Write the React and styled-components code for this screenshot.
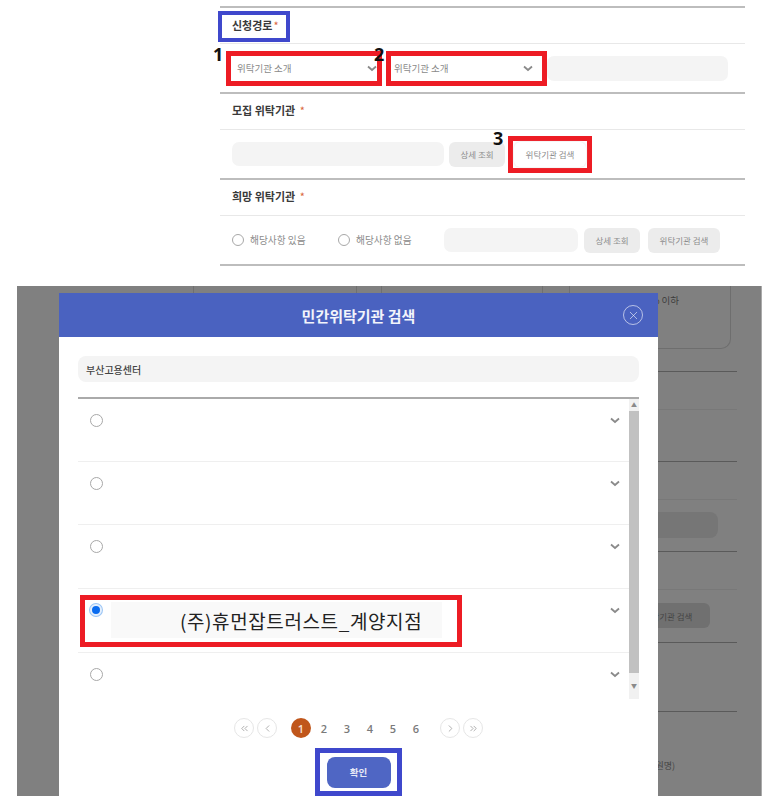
import React from "react";
import styled, { createGlobalStyle } from "styled-components";
import { ChevronLeft, ChevronRight, ChevronsLeft, ChevronsRight, X } from "lucide-react";

const KR = `"Noto Sans CJK KR", "Noto Sans", sans-serif`;
const RED = "#ed1c24";
const BLUE = "#3f48cc";

const Global = createGlobalStyle`
  html, body { margin: 0; padding: 0; background: #fff; overflow: hidden; }
  body { width: 773px; height: 796px; font-family: ${KR}; }
  * { box-sizing: border-box; }
`;

const Page = styled.div`
  width: 773px;
  height: 796px;
  padding-top: 6px;
  overflow: hidden;
`;

const Form = styled.div`
  width: 525px;
  margin-left: 220px;
  border-bottom: 2px solid #bdbdbd;
`;

const Section = styled.section`
  border-top: 2px solid #bdbdbd;
`;

const SectionHead = styled.div`
  height: 36px;
  padding: 0 0 3px 12px;
  display: flex;
  align-items: center;
  border-bottom: 1px solid #e8e8e8;
`;

const BoxedHead = styled(SectionHead)`
  padding: 3px 0 0;
  align-items: flex-start;
`;

const TitleBox = styled.div`
  width: 72px;
  height: 31px;
  margin-left: -2px;
  padding: 0 0 3px 10px;
  border: 4px solid ${BLUE};
  display: flex;
  align-items: center;
`;

const Title = styled.h3`
  margin: 0;
  font-size: 11px;
  font-weight: 700;
  color: #3a3a3a;
`;

const Star = styled.span`
  color: #d9663c;
  margin-left: ${(p) => p.$gap || 1}px;
  font-weight: 400;
`;

const Row = styled.div`
  height: 48px;
  display: flex;
  align-items: center;
  padding-left: ${(p) => p.$left || 12}px;
`;

const Select = styled.div`
  position: relative;
  width: ${(p) => p.$w}px;
  height: 35px;
  margin-right: ${(p) => p.$mr || 0}px;
  padding: 0 ${(p) => p.$pr}px 0 ${(p) => p.$pl}px;
  border: 5px solid ${RED};
  background: #fff;
  display: flex;
  align-items: center;
  justify-content: space-between;
  font-size: 9.5px;
  color: #8a8a8a;
  z-index: 1;
`;

const Marker = styled.span`
  position: absolute;
  left: ${(p) => p.$x}px;
  top: ${(p) => p.$y}px;
  font-family: "Open Sans", sans-serif;
  font-size: 18px;
  font-weight: 700;
  line-height: 18px;
  color: #111;
`;

const Field = styled.div`
  width: ${(p) => p.$w}px;
  height: ${(p) => p.$h || 24}px;
  margin-right: ${(p) => p.$mr || 0}px;
  border-radius: 7px;
  background: #f4f4f4;
  flex: none;
`;

const GreyButton = styled.div`
  width: ${(p) => p.$w}px;
  height: 25px;
  margin-right: ${(p) => p.$mr || 0}px;
  border-radius: 6px;
  background: #ececec;
  color: #8c8c8c;
  font-size: 8.5px;
  display: flex;
  align-items: center;
  justify-content: center;
  flex: none;
`;

const RedFrame = styled.div`
  position: relative;
  width: 84px;
  height: 37px;
  margin-left: 3px;
  border: 5px solid ${RED};
  background: #fff;
  display: flex;
  align-items: center;
  justify-content: center;
`;

const WhiteButton = styled.div`
  width: 72px;
  height: 25px;
  border-radius: 6px;
  background: #fff;
  box-shadow: 0 0 2px #ddd;
  color: #8c8c8c;
  font-size: 8.5px;
  display: flex;
  align-items: center;
  justify-content: center;
`;

const RadioLabel = styled.label`
  display: flex;
  align-items: center;
  gap: 6px;
  width: ${(p) => p.$w}px;
  font-size: 9.7px;
  color: #8c8c8c;
  flex: none;
`;

const Radio = styled.span`
  width: ${(p) => p.$size || 12}px;
  height: ${(p) => p.$size || 12}px;
  border-radius: 50%;
  border: 1.5px solid #a8a8a8;
  background: #fff;
  flex: none;
  display: block;
`;

const CheckedRadio = styled.span`
  width: 12px;
  height: 12px;
  margin: 0 1px 0 0;
  border-radius: 50%;
  background: #0a6cf0;
  border: 2px solid #e4effd;
  box-shadow: 0 0 0 1px #9cc6f5;
  flex: none;
  display: block;
`;

const Backdrop = styled.div`
  position: relative;
  width: 745px;
  height: 510px;
  margin: 20px 0 0 17px;
  padding-left: 203px;
  background: #808080;
  overflow: hidden;
  border-right: 1px solid #aaa;
`;

const BehindTicks = styled.div`
  position: absolute;
  left: 0;
  top: 0;
  height: 7px;
  display: flex;
`;

const BehindTick = styled.div`
  width: ${(p) => p.$w}px;
  border-right: 1px solid #707070;
`;

const BehindCard = styled.div`
  width: 511px;
  height: 63px;
  padding: 7px 51px 0 0;
  border: solid #6e6e6e;
  border-width: 0 1px 1px 0;
  border-bottom-right-radius: 10px;
  text-align: right;
  font-size: 9.5px;
  color: #3c3c3c;
`;

const BehindSection = styled.div`
  width: 517px;
  height: ${(p) => p.$h}px;
  margin-top: ${(p) => p.$mt || 0}px;
  border-top: 1px solid #5a5a5a;
`;

const BehindHead = styled.div`
  height: 38px;
  border-bottom: 1px solid #787878;
`;

const BehindRow = styled.div`
  display: flex;
  justify-content: flex-end;
  padding: ${(p) => p.$pt}px ${(p) => p.$pr}px 0 0;
  font-size: 9px;
  color: #444;
`;

const BehindField = styled.div`
  width: 300px;
  height: 26px;
  border-radius: 8px;
  background: #767676;
`;

const BehindButton = styled.div`
  width: 84px;
  height: 25px;
  border-radius: 6px;
  background: #707070;
  color: #444;
  font-size: 8.5px;
  display: flex;
  align-items: center;
  justify-content: center;
`;

const Modal = styled.div`
  position: absolute;
  left: 42px;
  top: 7px;
  width: 599px;
  height: 520px;
  background: #fff;
`;

const ModalHead = styled.header`
  height: 44px;
  padding: 0 15px;
  background: #4a62c0;
  display: grid;
  grid-template-columns: 1fr auto 1fr;
  align-items: center;
`;

const ModalTitle = styled.h2`
  grid-column: 2;
  margin: 0;
  color: #f2f4fb;
  font-size: 15px;
  font-weight: 700;
`;

const Close = styled.div`
  grid-column: 3;
  justify-self: end;
  width: 20px;
  height: 20px;
  border-radius: 50%;
  border: 1px solid rgba(255, 255, 255, 0.6);
  color: rgba(255, 255, 255, 0.7);
  display: flex;
  align-items: center;
  justify-content: center;
`;

const ModalBody = styled.div`
  padding: 19px 19px 0;
`;

const Search = styled.div`
  height: 26px;
  padding-left: 8px;
  border-radius: 8px;
  background: #f4f4f4;
  display: flex;
  align-items: center;
  font-size: 10px;
  font-weight: 500;
  color: #444;
`;

const List = styled.div`
  display: flex;
  height: 302px;
  margin-top: 15px;
  border-top: 2px solid #aaa;
  overflow: hidden;
`;

const Rows = styled.div`
  flex: 1;
`;

const Item = styled.div`
  position: relative;
  height: ${(p) => p.$h || 64}px;
  padding: 14.5px 9px 0 12px;
  display: flex;
  justify-content: space-between;
  border-bottom: ${(p) => (p.$last ? "none" : "1px solid #efefef")};
`;

const Chevron = styled.svg`
  width: 10px;
  height: 13px;
  fill: none;
  stroke: #8a8a8a;
  stroke-width: 1.8;
  flex: none;
`;

const Highlight = styled.div`
  position: absolute;
  left: 2px;
  top: 6px;
  width: 382px;
  height: 52px;
  padding: 2px 15px 4px 26px;
  border: 5px solid ${RED};
`;

const Patch = styled.div`
  height: 100%;
  padding-left: 69px;
  background: #f9f9f9;
  display: flex;
  align-items: center;
  font-size: 19px;
  line-height: 1;
  letter-spacing: 0.6px;
  color: #222;
  white-space: nowrap;
`;

const Scrollbar = styled.div`
  width: 10px;
  background: #f1f1f1;
  display: flex;
  flex-direction: column;
  align-items: center;
`;

const ArrowBox = styled.div`
  height: ${(p) => p.$h}px;
  flex: none;
  display: flex;
  align-items: center;
  justify-content: center;
  color: #8a8a8a;
  font-size: 6px;
  line-height: 1;
`;

const Thumb = styled.div`
  width: 100%;
  flex: 1;
  background: #c1c1c1;
`;

const Pagination = styled.nav`
  margin-top: 19px;
  display: flex;
  justify-content: center;
  gap: 14px;
`;

const PageGroup = styled.div`
  display: flex;
  gap: 3px;
`;

const PageArrow = styled.div`
  width: 20px;
  height: 20px;
  border-radius: 50%;
  border: 1px solid #e6e6e6;
  color: #a8a8a8;
  display: flex;
  align-items: center;
  justify-content: center;
`;

const PageNum = styled.div`
  width: 20px;
  height: 20px;
  border-radius: 50%;
  background: ${(p) => (p.$active ? "#c0561b" : "transparent")};
  color: ${(p) => (p.$active ? "#f6e2d6" : "#7a7a7a")};
  font-family: "Open Sans", sans-serif;
  font-size: 11px;
  font-weight: 600;
  display: flex;
  align-items: center;
  justify-content: center;
`;

const ConfirmFrame = styled.div`
  width: 87px;
  height: 48px;
  margin: 10px auto 0;
  border: 5px solid ${BLUE};
  display: flex;
  align-items: center;
  justify-content: center;
`;

const ConfirmButton = styled.div`
  width: 64px;
  height: 31px;
  border-radius: 8px;
  background: #4f66c4;
  color: #e6e9f6;
  font-size: 9.5px;
  font-weight: 700;
  display: flex;
  align-items: center;
  justify-content: center;
`;

const ChevronIcon = () => (
  <Chevron viewBox="0 0 10 13">
    <path d="M1 4.5l4 3.5 4-3.5" />
  </Chevron>
);

const ROWS = [63, 63, 64, 64, 46];
const TICKS = [177, 163, 25, 161, 27];

export default function App() {
  return (
    <Page>
      <Global />
      <Form>
        <Section>
          <BoxedHead>
            <TitleBox>
              <Title>신청경로<Star>*</Star></Title>
            </TitleBox>
          </BoxedHead>
          <Row $left={6}>
            <Select $w={156} $pl={6} $pr={0} $mr={4}>
              <Marker $x={-18} $y={-11}>1</Marker>
              위탁기관 소개
              <ChevronIcon />
            </Select>
            <Select $w={161} $pl={3} $pr={9}>
              <Marker $x={-17} $y={-11}>2</Marker>
              위탁기관 소개
              <ChevronIcon />
            </Select>
            <Field $w={181} $h={25} />
          </Row>
        </Section>
        <Section>
          <SectionHead>
            <Title>모집 위탁기관 <Star $gap={2}>*</Star></Title>
          </SectionHead>
          <Row>
            <Field $w={212} $mr={5} />
            <GreyButton $w={56}>상세 조회</GreyButton>
            <RedFrame>
              <Marker $x={-20} $y={-12}>3</Marker>
              <WhiteButton>위탁기관 검색</WhiteButton>
            </RedFrame>
          </Row>
        </Section>
        <Section>
          <SectionHead>
            <Title>희망 위탁기관 <Star $gap={2}>*</Star></Title>
          </SectionHead>
          <Row>
            <RadioLabel $w={106}><Radio />해당사항 있음</RadioLabel>
            <RadioLabel $w={106}><Radio />해당사항 없음</RadioLabel>
            <Field $w={134} $mr={6} />
            <GreyButton $w={56} $mr={8}>상세 조회</GreyButton>
            <GreyButton $w={72}>위탁기관 검색</GreyButton>
          </Row>
        </Section>
      </Form>

      <Backdrop>
        <BehindTicks>
          {TICKS.map((w, i) => <BehindTick key={i} $w={w} />)}
        </BehindTicks>
        <BehindCard>5% 이하</BehindCard>
        <BehindSection $mt={22} $h={90}>
          <BehindHead />
        </BehindSection>
        <BehindSection $h={90}>
          <BehindHead />
          <BehindRow $pt={12} $pr={19}><BehindField /></BehindRow>
        </BehindSection>
        <BehindSection $h={91}>
          <BehindHead />
          <BehindRow $pt={13} $pr={27}><BehindButton>위탁기관 검색</BehindButton></BehindRow>
        </BehindSection>
        <BehindSection $h={69} />
        <BehindSection $h={60}>
          <BehindRow $pt={47} $pr={62}>(인원명)</BehindRow>
        </BehindSection>

        <Modal>
          <ModalHead>
            <ModalTitle>민간위탁기관 검색</ModalTitle>
            <Close><X size={13} strokeWidth={1.5} /></Close>
          </ModalHead>
          <ModalBody>
            <Search>부산고용센터</Search>
            <List>
              <Rows>
                {ROWS.map((h, i) => (
                  <Item key={i} $h={h} $last={i === ROWS.length - 1}>
                    {i === 3 ? <CheckedRadio /> : <Radio $size={13} />}
                    <ChevronIcon />
                    {i === 3 && (
                      <Highlight>
                        <Patch>(주)휴먼잡트러스트_계양지점</Patch>
                      </Highlight>
                    )}
                  </Item>
                ))}
              </Rows>
              <Scrollbar>
                <ArrowBox $h={12}>▲</ArrowBox>
                <Thumb />
                <ArrowBox $h={26}>▼</ArrowBox>
              </Scrollbar>
            </List>
            <Pagination>
              <PageGroup>
                <PageArrow><ChevronsLeft size={11} /></PageArrow>
                <PageArrow><ChevronLeft size={11} /></PageArrow>
              </PageGroup>
              <PageGroup>
                <PageNum $active>1</PageNum>
                {[2, 3, 4, 5, 6].map((n) => <PageNum key={n}>{n}</PageNum>)}
              </PageGroup>
              <PageGroup>
                <PageArrow><ChevronRight size={11} /></PageArrow>
                <PageArrow><ChevronsRight size={11} /></PageArrow>
              </PageGroup>
            </Pagination>
            <ConfirmFrame>
              <ConfirmButton>확인</ConfirmButton>
            </ConfirmFrame>
          </ModalBody>
        </Modal>
      </Backdrop>
    </Page>
  );
}
